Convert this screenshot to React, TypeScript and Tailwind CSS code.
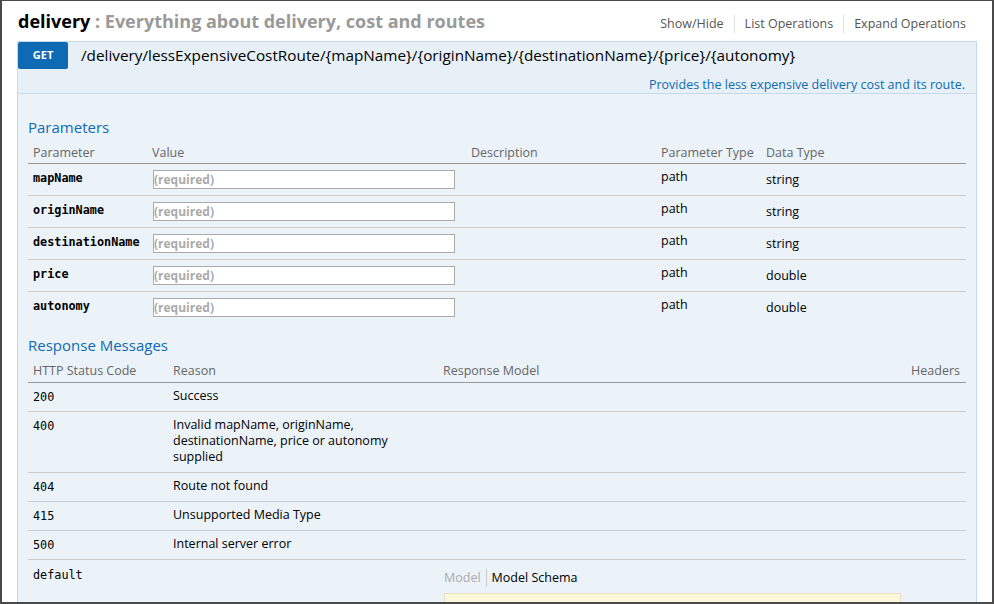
import React from "react";

const params = [
  { name: "mapName", type: "path", data: "string" },
  { name: "originName", type: "path", data: "string" },
  { name: "destinationName", type: "path", data: "string" },
  { name: "price", type: "path", data: "double" },
  { name: "autonomy", type: "path", data: "double" },
];

const responses = [
  { code: "200", reason: ["Success"] },
  { code: "400", reason: ["Invalid mapName, originName,", "destinationName, price or autonomy", "supplied"] },
  { code: "404", reason: ["Route not found"] },
  { code: "415", reason: ["Unsupported Media Type"] },
  { code: "500", reason: ["Internal server error"] },
];

const sans = { fontFamily: '"Open Sans", "Noto Sans", sans-serif' };
const mono = { fontFamily: '"DejaVu Sans Mono", "Liberation Mono", monospace' };

export default function App() {
  return (
    <div
      className="w-[994px] h-[604px] overflow-hidden bg-white border-t border-l-2 border-r-2 border-b-2 border-[#4a4a4a] text-[#222]"
      style={sans}
    >
      {/* resource header */}
      <div className="flex items-center justify-between h-[40px] pl-[16px] pr-[26px]">
        <h2 className="text-[18px] font-bold leading-none -mt-[1px]">
          <span className="text-black">delivery</span>
          <span className="text-[#999]"> : Everything about delivery, cost and routes</span>
        </h2>
        <ul className="flex items-center text-[12.5px] text-[#555] mt-[5px]">
          <li className="pr-[10px] border-r border-[#ddd] leading-[18px]">Show/Hide</li>
          <li className="px-[10px] border-r border-[#ddd] leading-[18px]">List Operations</li>
          <li className="pl-[10px] leading-[18px]">Expand Operations</li>
        </ul>
      </div>

      {/* operation */}
      <div className="ml-[15px] w-[960px] border border-[#c3d9ec] border-b-0">
        <div className="bg-[#e7f0f7] border-b border-[#c3d9ec] h-[52px] flex flex-col">
          <div className="flex items-center">
            <span className="w-[50px] h-[27px] flex items-center justify-center bg-[#0f6ab4] text-white text-[11px] font-bold rounded-[2px]">
              GET
            </span>
            <span className="ml-[13px] text-[15.3px] text-black leading-none">
              /delivery/lessExpensiveCostRoute/{"{mapName}"}/{"{originName}"}/{"{destinationName}"}/{"{price}"}/{"{autonomy}"}
            </span>
          </div>
          <div className="flex justify-end pr-[11px] mt-[7px] text-[12.5px] text-[#0f6ab4] leading-[18px]">
            Provides the less expensive delivery cost and its route.
          </div>
        </div>

        <div className="bg-[#ebf3f9] px-[10px] pt-[22px] h-[520px]">
          <h4 className="text-[15px] text-[#0f6ab4] leading-[22px]">Parameters</h4>
          <table className="w-full border-collapse mt-[6px]">
            <thead>
              <tr className="border-b border-[#999] text-[12.5px] text-[#666] text-left">
                <th className="font-normal w-[119px] pl-[5px] pb-[1px] leading-[18px]">Parameter</th>
                <th className="font-normal w-[319px] pl-[5px] pb-[1px] leading-[18px]">Value</th>
                <th className="font-normal w-[190px] pl-[5px] pb-[1px] leading-[18px]">Description</th>
                <th className="font-normal w-[105px] pl-[5px] pb-[1px] leading-[18px]">Parameter Type</th>
                <th className="font-normal pl-[5px] pb-[1px] leading-[18px]">Data Type</th>
              </tr>
            </thead>
            <tbody>
              {params.map((p, i) => (
                <tr
                  key={p.name}
                  className={`h-[32px] align-top ${i < params.length - 1 ? "border-b border-[#ccc]" : ""}`}
                >
                  <td className="pl-[5px] pt-[6px] text-[11.8px] font-bold text-black" style={mono}>
                    {p.name}
                  </td>
                  <td className="pl-[6px] pt-[6px]">
                    <div className="w-[302px] h-[19px] bg-white border border-[#aaa] flex items-center text-[12px] font-bold text-[#aaa] leading-none">
                      (required)
                    </div>
                  </td>
                  <td />
                  <td className="pl-[5px] pt-[4px] text-[12.5px] text-black leading-[18px]">{p.type}</td>
                  <td className="pl-[5px] pt-[7px] text-[12.5px] text-black leading-[18px]">{p.data}</td>
                </tr>
              ))}
            </tbody>
          </table>

          <h4 className="text-[15px] text-[#0f6ab4] leading-[22px] mt-[10px]">Response Messages</h4>
          <table className="w-full border-collapse mt-[6px]">
            <thead>
              <tr className="border-b border-[#999] text-[12.5px] text-[#666] text-left">
                <th className="font-normal w-[140px] pl-[5px] pb-[2px] leading-[18px]">HTTP Status Code</th>
                <th className="font-normal w-[270px] pl-[5px] pb-[2px] leading-[18px]">Reason</th>
                <th className="font-normal pl-[5px] pb-[2px] leading-[18px]">Response Model</th>
                <th className="font-normal text-right pr-[6px] pb-[2px] leading-[18px]">Headers</th>
              </tr>
            </thead>
            <tbody>
              {responses.map((r) => (
                <tr key={r.code} className="border-b border-[#ccc] align-top">
                  <td className="pl-[5px] pt-[6px] pb-[6px] text-[11.8px] text-black leading-[16px]" style={mono}>
                    {r.code}
                  </td>
                  <td
                    className={`pl-[5px] pt-[5px] text-[12.5px] text-black leading-[16px] ${
                      r.reason.length > 1 ? "pb-[7px]" : "pb-[6px]"
                    }`}
                  >
                    {r.reason.map((l) => (
                      <div key={l}>{l}</div>
                    ))}
                  </td>
                  <td />
                  <td />
                </tr>
              ))}
              <tr className="align-top">
                <td className="pl-[5px] pt-[7px] text-[11.8px] text-black leading-[16px]" style={mono}>
                  default
                </td>
                <td />
                <td className="pl-[6px] pt-[9px]" colSpan={2}>
                  <div className="flex items-center text-[12.5px] leading-[18px]">
                    <span className="text-[#aaa] pr-[5px] border-r border-[#ccc]">Model</span>
                    <span className="text-black pl-[5px]">Model Schema</span>
                  </div>
                  <div className="mt-[6px] w-[457px] h-[40px] bg-[#fcf6db] border border-[#e5e0c6]" />
                </td>
              </tr>
            </tbody>
          </table>
        </div>
      </div>
    </div>
  );
}
